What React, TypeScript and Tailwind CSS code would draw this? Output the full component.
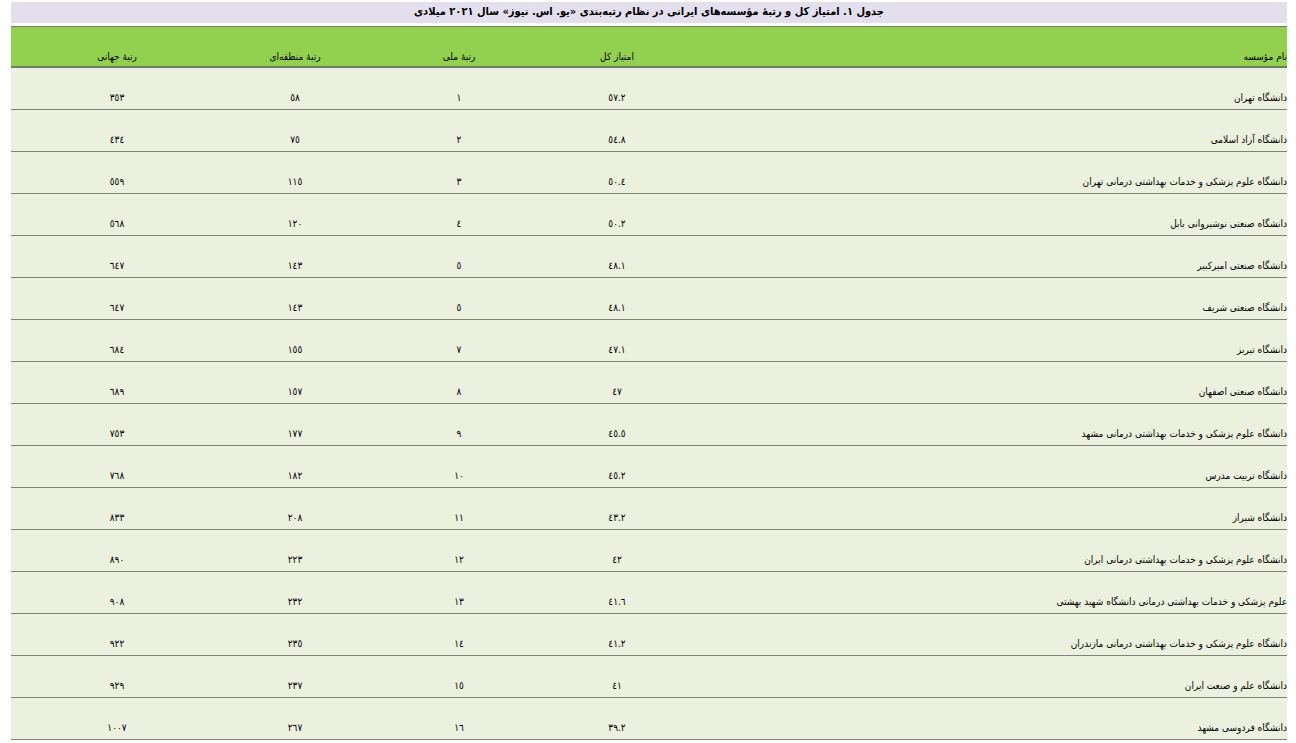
import React from 'react';

type Row = { name: string; score: string; national: string; regional: string; world: string };

const rows: Row[] = [
  { name: 'دانشگاه تهران', score: '٥٧.٢', national: '١', regional: '٥٨', world: '٣٥٣' },
  { name: 'دانشگاه آزاد اسلامی', score: '٥٤.٨', national: '٢', regional: '٧٥', world: '٤٣٤' },
  { name: 'دانشگاه علوم پزشکی و خدمات بهداشتی درمانی تهران', score: '٥٠.٤', national: '٣', regional: '١١٥', world: '٥٥٩' },
  { name: 'دانشگاه صنعتی نوشیروانی بابل', score: '٥٠.٢', national: '٤', regional: '١٢٠', world: '٥٦٨' },
  { name: 'دانشگاه صنعتی امیرکبیر', score: '٤٨.١', national: '٥', regional: '١٤٣', world: '٦٤٧' },
  { name: 'دانشگاه صنعتی شریف', score: '٤٨.١', national: '٥', regional: '١٤٣', world: '٦٤٧' },
  { name: 'دانشگاه تبریز', score: '٤٧.١', national: '٧', regional: '١٥٥', world: '٦٨٤' },
  { name: 'دانشگاه صنعتی اصفهان', score: '٤٧', national: '٨', regional: '١٥٧', world: '٦٨٩' },
  { name: 'دانشگاه علوم پزشکی و خدمات بهداشتی درمانی مشهد', score: '٤٥.٥', national: '٩', regional: '١٧٧', world: '٧٥٣' },
  { name: 'دانشگاه تربیت مدرس', score: '٤٥.٢', national: '١٠', regional: '١٨٢', world: '٧٦٨' },
  { name: 'دانشگاه شیراز', score: '٤٣.٢', national: '١١', regional: '٢٠٨', world: '٨٣٣' },
  { name: 'دانشگاه علوم پزشکی و خدمات بهداشتی درمانی ایران', score: '٤٢', national: '١٢', regional: '٢٢٣', world: '٨٩٠' },
  { name: 'علوم پزشکی و خدمات بهداشتی درمانی دانشگاه شهید بهشتی', score: '٤١.٦', national: '١٣', regional: '٢٣٢', world: '٩٠٨' },
  { name: 'دانشگاه علوم پزشکی و خدمات بهداشتی درمانی مازندران', score: '٤١.٢', national: '١٤', regional: '٢٣٥', world: '٩٢٢' },
  { name: 'دانشگاه علم و صنعت ایران', score: '٤١', national: '١٥', regional: '٢٣٧', world: '٩٢٩' },
  { name: 'دانشگاه فردوسی مشهد', score: '٣٩.٢', national: '١٦', regional: '٢٦٧', world: '١٠٠٧' },
];

const cols = 'grid grid-cols-[604px_132px_184px_144px_212px]';

const App: React.FC = () => {
  return (
    <div className="w-[1296px] h-[743px] overflow-hidden bg-white pt-[2px] pl-[11px] text-black" style={{ fontFamily: '"DejaVu Sans Condensed", "DejaVu Sans", sans-serif' }}>
      <div dir="rtl" className="w-[1276px]">
        {/* Title */}
        <div className="h-[21px] bg-[#e4dfec] flex items-center justify-center text-[11px] font-bold">
          جدول ۱. امتیاز کل و رتبهٔ مؤسسه‌های ایرانی در نظام رتبه‌بندی «یو. اس. نیوز» سال ۲۰۲۱ میلادی
        </div>

        {/* Header */}
        <div className={`${cols} mt-[3px] h-[42px] bg-[#92d050] border-t border-t-[#6f7f63] border-b-2 border-b-[#6f7f63] text-[10px]`}>
          <div className="flex items-end pb-[2px]">نام مؤسسه</div>
          <div className="flex items-end justify-center pb-[2px]">امتیاز کل</div>
          <div className="flex items-end justify-center pb-[2px]">رتبهٔ ملی</div>
          <div className="flex items-end justify-center pb-[2px]">رتبهٔ منطقه‌ای</div>
          <div className="flex items-end justify-center pb-[2px]">رتبهٔ جهانی</div>
        </div>

        {/* Rows */}
        {rows.map((r, i) => (
          <div key={i} className={`${cols} h-[42px] bg-[#ebf1de] border-b border-b-[#7f8479] text-[10px]`}>
            <div className="flex items-end pb-[4px]">{r.name}</div>
            <div className="flex items-end justify-center pb-[4px]">{r.score}</div>
            <div className="flex items-end justify-center pb-[4px]">{r.national}</div>
            <div className="flex items-end justify-center pb-[4px]">{r.regional}</div>
            <div className="flex items-end justify-center pb-[4px]">{r.world}</div>
          </div>
        ))}
      </div>
    </div>
  );
};

export default App;
